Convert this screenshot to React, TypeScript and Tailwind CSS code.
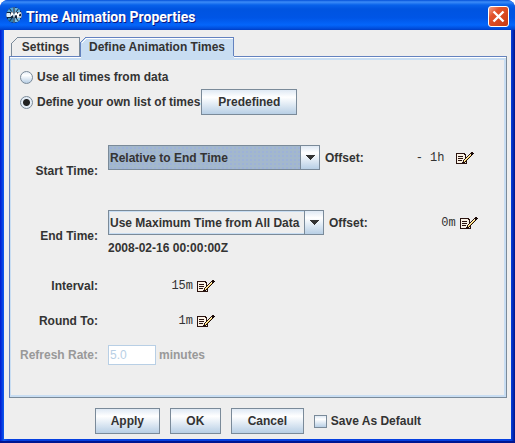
import React, { useState } from "react";
import type { ReactNode } from "react";

const NOTE_ROWS = [
  "...............#k.",
  "#########.....#kkk",
  "#ccccccc##...#wkk.",
  "#cccccccc#..#wyk..",
  "#c#####cc#.#wyk...",
  "#cccccccc##wyk....",
  "#c#####cc#wyk.....",
  "#ccccccc#wyk......",
  "#c####c#wyk.......",
  "#cccccc#yk#.......",
  "#ccccc#kk.#.......",
  "###########.......",
];

const NOTE_COLORS: Record<string, string> = {
  "#": "#2b1410",
  k: "#1a0a08",
  c: "#fbf3e6",
  w: "#fff3c0",
  y: "#f6d060",
};

function EditIcon() {
  return (
    <svg width="18" height="12" viewBox="0 0 18 12" shapeRendering="crispEdges" aria-hidden="true">
      {NOTE_ROWS.flatMap((row, y) =>
        row.split("").map((c, x) =>
          c === "." ? null : <rect key={`${x}-${y}`} x={x} y={y} width="1" height="1" fill={NOTE_COLORS[c]} />
        )
      )}
    </svg>
  );
}

function GlobeIcon() {
  return (
    <svg width="16" height="16" viewBox="0 0 16 16" aria-hidden="true">
      <clipPath id="globe">
        <circle cx="8" cy="8" r="7.7" />
      </clipPath>
      <g clipPath="url(#globe)">
        <rect width="16" height="16" fill="#10243c" />
        <path d="M1 0H7V5H1Z" fill="#4fa4dc" />
        <path d="M9 1H14V5H9Z" fill="#66b4e4" />
        <path d="M2 11H7V15H2Z" fill="#2f7fb4" />
        <path d="M9 11H14V15H9Z" fill="#7cc0e8" />
        <path d="M3 1L6 5M13 1L10 5M3 15L6 11M13 15L10 11" stroke="#10243c" strokeWidth="1" />
        <path d="M0 6H4L5 10H0Z" fill="#d8ecf8" />
        <path d="M5 9L6 6L8 9L10 6L12 9L13 6H16V10H11" stroke="#ffffff" strokeWidth="1.6" fill="none" />
        <path d="M8 0V16" stroke="#8fb4cc" strokeWidth="1" />
      </g>
    </svg>
  );
}

function MetalButton({ children, className }: { children: ReactNode; className: string }) {
  return (
    <button
      type="button"
      className={`h-[26px] shrink-0 border border-[#7a8a99] bg-linear-to-b from-[#dfe9f4] via-white via-30% to-[#b8cfe5] font-bold ${className}`}
    >
      {children}
    </button>
  );
}

function Combo({
  id,
  options,
  className,
}: {
  id: string;
  options: string[];
  className: string;
}) {
  return (
    <div className="relative shrink-0">
      <select
        id={id}
        className={`block h-[25px] appearance-none border border-[#7a8a99] pr-5 pl-px font-bold outline-none ${className}`}
      >
        {options.map((o) => (
          <option key={o}>{o}</option>
        ))}
      </select>
      <span className="pointer-events-none absolute inset-y-0 right-0 flex w-5 items-center justify-center border border-[#7a8a99] bg-linear-to-b from-[#dfe9f4] via-white via-30% to-[#b8cfe5]">
        <svg width="10" height="5" viewBox="0 0 10 5" shapeRendering="crispEdges" aria-hidden="true">
          <path d="M0 0H10L5 5Z" fill="#333333" />
        </svg>
      </span>
    </div>
  );
}

function Duration({ value, label, className }: { value: string; label: string; className: string }) {
  return (
    <>
      <span className={`text-right font-['Liberation_Mono',monospace] whitespace-pre ${className}`}>{value}</span>
      <button type="button" aria-label={label} className="ml-1 flex shrink-0">
        <EditIcon />
      </button>
    </>
  );
}

const ROW = "grid grid-cols-[83px_1fr] gap-x-[10px]";

export default function App() {
  const [mode, setMode] = useState("own");
  const radio =
    "size-[13px] shrink-0 appearance-none rounded-full border border-[#7a8a99] bg-linear-to-b from-[#e4edf6] via-white via-30% to-[#b8cfe5]";
  const dot = "checked:bg-[radial-gradient(circle,#222_0_3px,#e4edf6_4px)]";

  return (
    <div className="min-h-screen bg-white">
      <div className="flex min-h-screen flex-col rounded-t-lg border-b-2 border-[#001590] bg-[linear-gradient(90deg,#0019cf_0,#0c5bf0_4px,#0540e0_8px,#0540e0_calc(100%-4px),#00138c_100%)] font-['Liberation_Sans',Arial,sans-serif] text-xs leading-4 font-bold text-[#333]">
        <header className="flex h-[30px] shrink-0 items-center gap-1 rounded-t-lg bg-[linear-gradient(180deg,#0350d8_0,#3c8cf8_2px,#0862ea_5px,#0054e0_9px,#0055e6_18px,#0466fb_25px,#0049d6_29px,#003bc0_30px)] px-[6px]">
          <GlobeIcon />
          <h1 className="flex-1 pt-1 font-[Roboto,sans-serif] text-sm leading-5 font-bold text-white [text-shadow:1px_1px_#0a1883]">
            Time Animation Properties
          </h1>
          <button
            type="button"
            aria-label="Close"
            className="mt-[3px] flex size-[21px] items-center justify-center rounded-[3px] border border-white bg-linear-to-br from-[#f0a088] via-[#e3532b] via-30% to-[#c93a10]"
          >
            <svg width="13" height="13" viewBox="0 0 13 13" aria-hidden="true">
              <path d="M1.5 1.5L11.5 11.5M11.5 1.5L1.5 11.5" stroke="white" strokeWidth="2.4" />
            </svg>
          </button>
        </header>

        <main className="mx-1 mb-[2px] flex flex-1 flex-col bg-[#eeeeee] pt-[7px] pr-1 pl-[5px]">
          <div role="tablist" className="flex h-[19px] pl-[2px]">
            <button type="button" role="tab" aria-selected="false" className="relative h-[19px] w-[69px] font-bold">
              <svg className="absolute inset-0" width="69" height="19" viewBox="0 0 69 19" shapeRendering="crispEdges" aria-hidden="true">
                <path d="M0.5 19V6.5L6.5 0.5H68.5V19" fill="#eeeeee" stroke="#7a8a99" />
              </svg>
              <span className="relative">Settings</span>
            </button>
            <button type="button" role="tab" aria-selected="true" className="relative z-10 h-[22px] w-[154px] font-bold">
              <svg className="absolute inset-0" width="154" height="22" viewBox="0 0 154 22" shapeRendering="crispEdges" aria-hidden="true">
                <path d="M0.5 22V5.5L5.5 0.5H153.5V22" fill="#c8ddf2" />
                <path d="M1.5 6.5L6.5 1.5H153" fill="none" stroke="#ffffff" />
                <path d="M0.5 19V5.5L5.5 0.5H153.5V19" fill="none" stroke="#6382bf" />
              </svg>
              <span className="relative -mt-[3px] block">Define Animation Times</span>
            </button>
          </div>

          <section className="flex flex-1 flex-col border border-[#7a8a99] border-t-[#6382bf] border-l-[#6382bf]">
            <div className="flex flex-1 flex-col border-t border-white">
              <div className="flex-1 border-2 border-l border-[#c8ddf2] pt-2 pb-5">
                <div className="flex h-[18px] items-center gap-1 pl-[9px]">
                  <input type="radio" id="all" name="mode" checked={mode === "all"} onChange={() => setMode("all")} className={`${radio} ${dot}`} />
                  <label htmlFor="all">Use all times from data</label>
                </div>
                <div className="mt-[3px] flex items-center gap-px pl-[9px]">
                  <div className="flex items-center gap-1">
                    <input type="radio" id="own" name="mode" checked={mode === "own"} onChange={() => setMode("own")} className={`${radio} ${dot}`} />
                    <label htmlFor="own">Define your own list of times</label>
                  </div>
                  <MetalButton className="w-24">Predefined</MetalButton>
                </div>

                <div className="mt-[30px] flex flex-col gap-[13px] pl-[4px]">
                  <div className={`${ROW} h-[52px]`}>
                    <label htmlFor="start" className="self-center text-right">Start Time:</label>
                    <div className="flex h-[25px] items-center">
                      <Combo id="start" className="w-[212px] bg-[#a3b8cc] bg-[radial-gradient(#9db2d8_1px,transparent_1px)] bg-size-[4px_4px]" options={["Relative to End Time", "Current Time (Now)"]} />
                      <span className="ml-[5px]">Offset:</span>
                      <Duration value="- 1h " label="Edit start offset" className="w-[88px] font-normal" />
                    </div>
                  </div>
                  <div className={`${ROW} h-[52px]`}>
                    <label htmlFor="end" className="self-center text-right">End Time:</label>
                    <div>
                      <div className="flex h-[25px] items-center">
                        <Combo id="end" className="w-[216px] bg-[#eeeeee] shadow-[inset_0_0_0_1px_#c8ddf2]" options={["Use Maximum Time from All Data", "Current Time (Now)"]} />
                        <span className="ml-[5px]">Offset:</span>
                        <Duration value="0m" label="Edit end offset" className="w-[88px] font-normal" />
                      </div>
                      <p className="mt-[5px]">2008-02-16 00:00:00Z</p>
                    </div>
                  </div>
                  <div className={`${ROW} h-[22px] items-center`}>
                    <span className="text-right">Interval:</span>
                    <div className="flex items-center">
                      <Duration value="15m" label="Edit interval" className="w-[85px] font-normal" />
                    </div>
                  </div>
                  <div className={`${ROW} h-[22px] items-center`}>
                    <span className="text-right">Round To:</span>
                    <div className="flex items-center">
                      <Duration value="1m" label="Edit round to" className="w-[85px] font-normal" />
                    </div>
                  </div>
                  <div className={`${ROW} h-5 items-center text-[#999]`}>
                    <label htmlFor="rate" className="text-right whitespace-nowrap">Refresh Rate:</label>
                    <div className="flex items-center gap-[3px]">
                      <input id="rate" disabled defaultValue="5.0" className="h-5 w-12 border border-[#b8cfe5] bg-white px-px font-normal text-[#b8cfe5]" />
                      <span>minutes</span>
                    </div>
                  </div>
                </div>
              </div>
            </div>
          </section>

          <footer className="flex items-center justify-center gap-[10px] pt-[10px] pb-[5px]">
            <MetalButton className="w-[65px]">Apply</MetalButton>
            <MetalButton className="w-[51px]">OK</MetalButton>
            <MetalButton className="w-[73px]">Cancel</MetalButton>
            <label className="flex items-center gap-1">
              <input type="checkbox" className="size-[13px] appearance-none border border-[#7a8a99] bg-linear-to-b from-[#dfe9f4] via-white via-30% to-[#b8cfe5] checked:bg-[#6382bf] checked:bg-none" />
              Save As Default
            </label>
          </footer>
        </main>
      </div>
    </div>
  );
}
